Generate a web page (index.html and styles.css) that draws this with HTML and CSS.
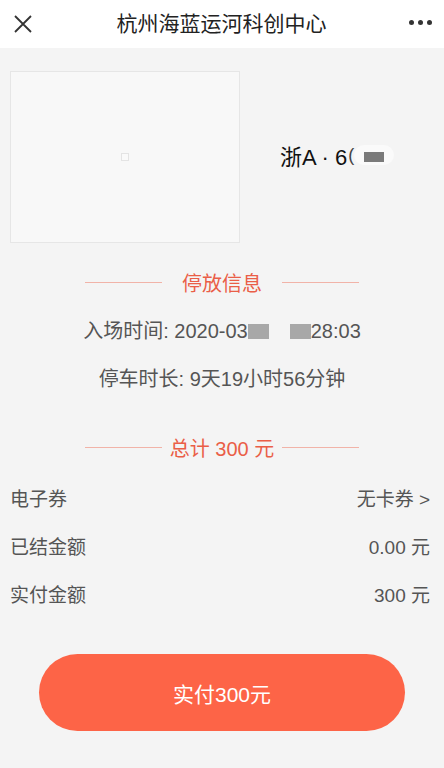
FILE: index.html
```html
<!DOCTYPE html>
<html lang="zh">
<head>
<meta charset="utf-8">
<link rel="stylesheet" href="styles.css">
</head>
<body>
<div class="header">
  <svg class="close" width="18" height="18" viewBox="0 0 18 18"><path d="M1 1L17 17M17 1L1 17" stroke="#333" stroke-width="1.8" fill="none"/></svg>
  <div class="title">杭州海蓝运河科创中心</div>
  <div class="more"><span></span><span></span><span></span></div>
</div>
<div class="top">
  <div class="photo"><div class="ph"></div></div>
  <div class="plate">浙A · 6<span class="cut">(</span><span class="mask"><span class="blk"></span></span></div>
</div>
<div class="section">
  <div class="divider"><span class="line"></span><span class="dtext">停放信息</span><span class="line"></span></div>
  <div class="info">入场时间: 2020-03<span class="blur a"></span><span class="gap"></span><span class="blur b"></span>28:03</div>
  <div class="info second">停车时长: 9天19小时56分钟</div>
</div>
<div class="divider total"><span class="line"></span><span class="dtext">总计 300 元</span><span class="line"></span></div>
<div class="rows">
  <div class="row"><span>电子券</span><span>无卡券 &gt;</span></div>
  <div class="row"><span>已结金额</span><span>0.00 元</span></div>
  <div class="row"><span>实付金额</span><span>300 元</span></div>
</div>
<div class="btnwrap"><div class="btn">实付300元</div></div>
</body>
</html>
```
FILE: styles.css
```css
html, body { margin: 0; padding: 0; }
body {
  background: #f4f4f4;
  font-family: "Noto Sans CJK SC", "Liberation Sans", sans-serif;
  width: 444px;
  height: 768px;
  overflow: hidden;
}
.header {
  height: 48px;
  background: #fff;
  display: flex;
  align-items: center;
  justify-content: space-between;
  padding: 0 12px 0 14px;
}
.close { display: block; }
.title { font-size: 21px; color: #222; margin-left: 2px; margin-top: -4px; }
.more { display: flex; gap: 4px; width: 23px; margin-top: -4px; }
.more span { width: 5px; height: 5px; border-radius: 50%; background: #333; }
.top {
  display: flex;
  align-items: center;
  padding: 23px 0 0 10px;
}
.photo {
  width: 228px;
  height: 170px;
  background: #f8f8f8;
  border: 1px solid #e6e6e6;
  display: flex;
  align-items: center;
  justify-content: center;
}
.ph { width: 6px; height: 6px; border: 1px solid #e4e4e4; background: #fafafa; }
.plate {
  margin-left: 40px;
  font-family: "Liberation Sans", "Noto Sans CJK SC", sans-serif;
  font-size: 22px;
  color: #111;
  display: flex;
  align-items: center;
  margin-top: -4px;
}
.cut { color: #444; font-size: 18px; margin-left: 1px; }
.mask {
  width: 40px; height: 20px; background: #fafafa; border-radius: 10px;
  display: flex; align-items: center; justify-content: center;
}
.blk { width: 20px; height: 10px; background: #7a7a7a; margin-top: 3px; }
.section { padding-top: 24px; }
.divider {
  display: flex;
  align-items: center;
  justify-content: center;
  height: 30px;
}
.line { width: 77px; height: 1px; background: #f1b3a8; }
.dtext { color: #ea5e47; font-size: 20px; width: 120px; text-align: center; white-space: nowrap; font-family: "Liberation Sans", "Noto Sans CJK SC", sans-serif; }
.info {
  text-align: center;
  font-size: 20px;
  color: #555;
  margin-top: 19px;
  height: 30px;
  line-height: 30px;
  display: flex;
  justify-content: center;
  align-items: center;
  font-family: "Liberation Sans", "Noto Sans CJK SC", sans-serif;
}
.info.second { margin-top: 18px; }
.blur { display: inline-block; height: 15px; background: #a8a8a8; }
.blur.a { width: 21px; }
.gap { display: inline-block; width: 21px; }
.blur.b { width: 21px; }
.total { margin-top: 38px; }
.rows { margin-top: 11px; padding: 0 14px 0 10px; }
.row {
  display: flex;
  justify-content: space-between;
  align-items: center;
  height: 48px;
  font-size: 19px;
  color: #555;
  font-family: "Liberation Sans", "Noto Sans CJK SC", sans-serif;
}
.btnwrap { padding: 37px 39px 0 39px; }
.btn {
  height: 77px;
  border-radius: 39px;
  background: #fd6447;
  color: #fff;
  font-size: 21px;
  display: flex;
  align-items: center;
  justify-content: center;
  font-family: "Liberation Sans", "Noto Sans CJK SC", sans-serif;
}
```
